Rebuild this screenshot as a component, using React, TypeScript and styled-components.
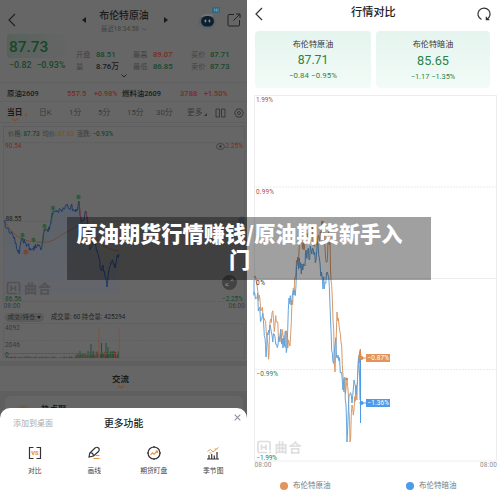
import React from "react";
import styled, { createGlobalStyle } from "styled-components";

const GlobalStyle = createGlobalStyle`
  * { box-sizing: border-box; }
  body { margin: 0; background: #fff; font-family: Roboto, "Noto Sans CJK SC", sans-serif; }
  svg { display: block; }
  svg text { font-family: Roboto, "Noto Sans CJK SC", sans-serif; }
`;

const GREEN = "#17472a";
const RED = "#7a2c22";
const INK = "#1a1a1a";
const MUTED = "#424242";

const Page = styled.div`
  position: relative;
  display: flex;
  width: 500px;
  height: 497px;
  overflow: hidden;
`;
const QuotePanel = styled.section`
  display: flex;
  flex-direction: column;
  width: 247px;
  height: 497px;
  margin-right: 1px;
  background: #666;
`;
const ComparePanel = styled.section`
  display: flex;
  flex-direction: column;
  width: 252px;
  height: 497px;
  background: #fff;
`;
const QuoteHead = styled.header`
  display: grid;
  grid-template-columns: 67px 16px 66px 5px 34px 31px 14px;
  align-items: center;
  height: 34px;
  padding: 5px 0 0 8px;
`;
const ArrowSlot = styled.div`
  padding: 1px 0 0 7px;
`;
const IconLift = styled.div`
  padding-bottom: 5px;
`;
const TitleStack = styled.div`
  display: flex;
  flex-direction: column;
  align-items: center;
  gap: 2px;
  padding-top: 5px;
`;
const SubTitle = styled.div`
  display: flex;
  align-items: center;
  gap: 3px;
`;
const Contracts = styled.div`
  display: grid;
  grid-template-columns: 60px 27px 28px 58px 24px 30px;
  align-items: center;
  height: 19px;
  padding: 3px 0 0 7px;
  border-bottom: 1px solid #606060;
`;
const Label = styled.span<{ $size?: number; $color?: string; $weight?: number; $gap?: number }>`
  font-size: ${(p) => p.$size ?? 7.3}px;
  line-height: 1.3;
  color: ${(p) => p.$color ?? INK};
  font-weight: ${(p) => p.$weight ?? 400};
  letter-spacing: ${(p) => p.$gap ?? 0}px;
  white-space: nowrap;
`;
const Summary = styled.div`
  display: flex;
  height: 40px;
`;
const PriceBlock = styled.div`
  width: 69px;
  padding-left: 7px;
`;
const PriceBox = styled.div`
  display: flex;
  align-items: center;
  height: 24px;
  padding: 2px 0 0 2px;
  border-radius: 2px;
  background: linear-gradient(90deg, #58625c, #656666);
`;
const Change = styled.div`
  display: flex;
  gap: 5px;
  padding: 2px 0 0 2px;
`;
const Stats = styled.div`
  display: grid;
  grid-template-columns: 20px 37px 20px 38px 19px 30px;
  grid-template-rows: 12px 12px;
  align-items: center;
  padding: 15px 0 0 7px;
`;
const ChevronRow = styled.div`
  display: flex;
  justify-content: center;
  height: 9px;
  border-bottom: 1px solid #606060;
`;
const Tabs = styled.div`
  display: grid;
  grid-template-columns: 32px 30px 29px 29px 29px 31px 28px 19px 10px;
  align-items: center;
  height: 21px;
  padding: 2px 0 0 7px;
  border-bottom: 1px solid #606060;
`;
const TabLabel = styled.div`
  display: flex;
  align-items: flex-end;
  gap: 2px;
  svg { margin-bottom: 2px; }
`;
const ActiveTab = styled.div`
  display: flex;
  flex-direction: column;
  align-items: flex-start;
  padding-top: 4px;
`;
const SmileSlot = styled.div`
  padding-left: 4px;
`;
const InfoRow = styled.div`
  display: grid;
  grid-template-columns: 15.5px 19px 15.5px 19px 15.5px 24px;
  align-items: center;
  height: 16px;
  margin: 3px 2px 0 3px;
  padding-left: 4px;
  border: 1px solid #5e5e5e;
  border-bottom: 0;
`;
const VolumeRow = styled.div`
  display: flex;
  align-items: center;
  gap: 7px;
  height: 14px;
  padding: 2px 0 0 5px;
`;
const Pill = styled.div`
  display: flex;
  align-items: center;
  justify-content: center;
  gap: 2px;
  width: 39px;
  height: 9px;
  border-radius: 5px;
  background: #5b5b5b;
`;
const Forum = styled.div`
  display: flex;
  flex-direction: column;
  align-items: center;
  height: 30px;
  padding: 8px 6px 0 0;
  border-top: 5px solid #5f5f5f;
`;
const Feed = styled.div`
  flex: 1;
  padding: 5px 4px 0 5px;
  background: #5f5f5f;
`;
const FeedCard = styled.div`
  display: flex;
  align-items: flex-start;
  gap: 10px;
  height: 30px;
  padding: 8px 0 0 11px;
  border-radius: 6px;
  background: #666;
`;
const Avatar = styled.div`
  width: 15px;
  height: 15px;
  margin-top: 1px;
  border-radius: 50%;
  background: #6b5d4c;
`;
const Sheet = styled.div`
  position: absolute;
  left: 0;
  bottom: 0;
  width: 247px;
  height: 89px;
  border-radius: 10px 10px 0 0;
  background: #fff;
`;
const SheetHead = styled.div`
  display: grid;
  grid-template-columns: 91px 130px 7px;
  height: 31px;
  padding: 1px 0 0 13px;
  align-items: center;
  svg { margin-bottom: 13px; }
`;
const Functions = styled.div`
  display: grid;
  grid-template-columns: repeat(4, 59.5px);
  padding: 7px 0 0 5px;
`;
const FunctionItem = styled.div`
  display: flex;
  flex-direction: column;
  align-items: center;
  gap: 6.5px;
`;
const CompareHead = styled.div`
  display: grid;
  grid-template-columns: 96px 126px 14px;
  align-items: center;
  height: 27px;
  padding-left: 7px;
`;
const Cards = styled.div`
  display: flex;
  gap: 5px;
  padding: 4px 0 0 7px;
`;
const CompareCard = styled.div<{ $w: number }>`
  display: flex;
  flex-direction: column;
  align-items: center;
  gap: 3px;
  width: ${(p) => p.$w}px;
  height: 57px;
  padding: 8px 0 0 0;
  border-radius: 4px;
  background: linear-gradient(#e5f4ee, #f2fbf7);
`;
const ChartSlot = styled.div`
  padding-top: 7px;
`;
const Legend = styled.div`
  display: flex;
  align-items: center;
  height: 18px;
  margin-top: 7px;
  padding-left: 32px;
  gap: 75.5px;
`;
const LegendItem = styled.div`
  display: flex;
  align-items: center;
  gap: 5px;
`;
const Dot = styled.i<{ $color: string }>`
  width: 8px;
  height: 8px;
  border-radius: 50%;
  background: ${(p) => p.$color};
`;
const Banner = styled.h1`
  position: absolute;
  left: 67px;
  top: 217px;
  width: 364px;
  height: 63px;
  margin: 0;
  padding: 3px 28px 0 9px;
  background: rgba(0, 0, 0, 0.373);
  color: #fff;
  font: 900 21.2px/26px "Noto Sans CJK SC", sans-serif;
  text-align: center;
  white-space: nowrap;
`;

type Point = [number, number];

/* Inserts deterministic noisy samples between the given turning points. */
function jagged(points: Point[], amp: number, seed: number) {
  const out: string[] = [];
  points.forEach(([x, y], i) => {
    out.push(`${x},${y}`);
    const next = points[i + 1];
    if (!next) return;
    const n = Math.max(1, Math.round((next[0] - x) * 1.1));
    for (let k = 1; k <= n; k++) {
      const t = k / (n + 1);
      const s = Math.sin((i * 7 + k * 3 + 1) * 12.9898 * seed) * 43758.5453;
      const r = (s - Math.floor(s)) * 2 - 1;
      out.push(`${(x + (next[0] - x) * t).toFixed(1)},${(y + (next[1] - y) * t + r * amp).toFixed(1)}`);
    }
  });
  return out.join(" ");
}

const price: Point[] = [[4,221],[6,228],[8,228],[10,233],[13,236],[16,243],[18,252],[19,254],[20,246],[22,238],[25,243],[28,245],[30,248],[33,249],[34,246],[36,248],[38,244],[41,250],[43,240],[44,232],[46,229],[48,232],[50,225],[52,213],[54,211],[57,212],[60,209],[64,209],[67,204],[69,209],[71,206],[74,211],[76,209],[78,206],[79,201],[80,216],[82,222],[84,220],[86,211],[88,225],[89,236],[90,250],[93,242],[95,245],[97,250],[99,258],[101,270],[103,265],[105,276],[107,287],[109,270],[111,262],[113,262],[115,268],[117,256],[119,254]];
const blueLine: Point[] = [[254,280],[254,292],[257,298],[259,308],[262,318],[265,338],[266,357],[268,335],[270,325],[272,335],[275,337],[278,345],[280,335],[283,348],[285,332],[287,348],[289,298],[291,305],[294,295],[296,285],[297,265],[300,268],[302,264],[305,266],[306,250],[309,260],[311,250],[314,255],[316,260],[318,244],[320,263],[323,289],[325,282],[328,275],[330,305],[331,330],[333,362],[335,345],[338,355],[341,372],[343,390],[344,378],[346,405],[347,442],[349,395],[352,403],[354,380],[356,395],[358,367],[359,360],[360,400]];
const orangeLine: Point[] = [[254,278],[257,285],[260,300],[264,318],[268,345],[269,355],[270,322],[272,313],[275,325],[277,322],[280,342],[283,335],[285,345],[287,338],[290,346],[292,300],[294,295],[296,275],[297,262],[301,243],[304,250],[306,235],[309,245],[312,230],[314,240],[316,236],[319,238],[321,235],[323,221],[325,248],[327,262],[328,241],[330,238],[331,280],[333,320],[335,372],[337,312],[339,325],[341,342],[343,376],[344,392],[347,380],[349,412],[350,442],[352,405],[354,410],[356,385],[357,400],[358,368],[360,352],[361,358]];

const Back = ({ c }: { c: string }) => (
  <svg width="8" height="14" fill="none" stroke={c} strokeWidth="1.2"><path d="M7 1 1 7l6 6" /></svg>
);
const Arrow = ({ flip }: { flip?: boolean }) => (
  <svg width="5" height="6" fill={INK}><path d={flip ? "M0 0v6l4-3z" : "M4 0v6L0 3z"} /></svg>
);
const Corner = ({ c }: { c: string }) => (
  <svg width="3" height="3" fill={c}><path d="M3 0v3H0z" /></svg>
);
const Smile = () => (
  <svg width="8" height="4" fill="none" stroke="#8a4e20" strokeWidth="1.5"><path d="M.7.6Q4 4.4 7.3.6" /></svg>
);
const Robot = () => (
  <svg width="24" height="24">
    <ellipse cx="11" cy="17" rx="9" ry="7" fill="#50606e" opacity=".5" />
    <path d="M5 12q3-4 9-2.500l2-1 1 3z" fill="#777" />
    <rect x="5" y="11" width="13" height="10.500" rx="5.200" fill="#111e2a" />
    <rect x="8.700" y="14.500" width="1.500" height="3" rx=".7" fill="#63a2b5" />
    <rect x="12.700" y="14.500" width="1.500" height="3" rx=".7" fill="#63a2b5" />
    <path d="M18 2h6v4q0 2-2 2h-6V4q0-2 2-2z" fill="#316783" />
    <path d="M18.500 3.500v3m0-1.500h2m0-1.500v3m1.500-3v3" stroke="#79a0ac" strokeWidth=".8" />
  </svg>
);
const Share = () => (
  <svg width="14" height="14" fill="none" stroke="#222" strokeWidth="1"><path d="M7 1.500H2q-1 0-1 1V12q0 1 1 1h9.500q1 0 1-1V7M9 1h4v4M13 1 6.500 7.500" /></svg>
);

const Watermark = ({ x, y, c }: { x: number; y: number; c: string }) => (
  <g transform={`translate(${x} ${y})`} fill="none" stroke={c} strokeWidth="1.7">
    <path d="M10 12H2q-1 0-1-1V2q0-1 1-1h10q1 0 1 1v8M4.500 4v5.500m4.500-5.500v5.500M4.500 6.800H9M12 12h2" />
    <text x="17.500" y="11.500" fontSize="13" fontWeight="700" fill={c} stroke="none" textLength="27">曲合</text>
  </g>
);

const Marker = ({ x, y, red }: { x: number; y: number; red?: boolean }) => (
  <g>
    <circle cx={x} cy={y} r="2.600" fill={red ? "#71514a" : "#4c6653"} />
    <text x={x} y={y + 1.7} fontSize="4.800" textAnchor="middle" fontWeight="700" fill={red ? "#94301f" : "#174d27"}>9</text>
  </g>
);

const PriceChart = () => (
  <svg width="247" height="167" viewBox="0 142 247 167">
    <path d="M3.500 142v159.500h241V142M3 142.500h242" fill="none" stroke="#5e5e5e" strokeWidth=".8" />
    <path d="M4 221.500h240" stroke="#5c5c5c" strokeWidth=".6" />
    <defs>
      <linearGradient id="area" x1="0" y1="0" x2="0" y2="1"><stop stopColor="#5c626b" /><stop offset="1" stopColor="#63656a" /></linearGradient>
    </defs>
    <polygon points={`4,295 ${jagged(price, 0.5, 2.1)} 119,295`} fill="url(#area)" />
    <Watermark x={6.5} y={281.5} c="#525252" />
    <path d="M4 220Q12 235 22 239T48 242Q53 241 61 235L76 227Q86 221 88 224 92 232 100 243 108 250 119 251" fill="none" stroke="#70452f" strokeWidth=".8" />
    <polyline points={jagged(price, 3.2, 2.1)} fill="none" stroke="#1b3569" strokeWidth=".9" />
    <path d="M23 237v5m21-13-2 15m9-20 2-11m26-3v-5" stroke="#27583a" strokeWidth=".8" />
    <path d="m79 202 2 18m5-9 3 23" stroke="#743437" strokeWidth=".8" />
    <Marker x={22.5} y={235.5} /><Marker x={33.5} y={240} /><Marker x={44.5} y={226.5} />
    <Marker x={53} y={208.5} /><Marker x={78.5} y={197} /><Marker x={26} y={252} red />
    <text x="5" y="148" fontSize="6.500" fill={RED} textLength="16.500">90.54</text>
    <text x="5.500" y="220.500" fontSize="6.500" fill="#222" textLength="16">88.55</text>
    <text x="5" y="301" fontSize="6.500" fill={GREEN} textLength="16.500">86.56</text>
    <text x="3.500" y="308" fontSize="6.500" fill="#3c3c3c" textLength="17">08:00</text>
    <text x="225.500" y="148" fontSize="6.500" fill={RED} textLength="17.500">2.25%</text>
    <text x="222" y="301" fontSize="6.500" fill={GREEN} textLength="21">−2.25%</text>
    <text x="228.500" y="308" fontSize="6.500" fill="#3c3c3c" textLength="16.500">06:00</text>
    <ellipse cx="220.500" cy="146.500" rx="4" ry="3" fill="none" stroke="#333" strokeWidth=".7" /><circle cx="220.500" cy="146.500" r="1.200" fill="#333" />
    <path d="M244 216.500h-2a4 4 0 0 0 0 8h2z" fill="#4c5a68" />
    <circle cx="229.500" cy="282.500" r="7.500" fill="#434343" />
    <path d="m230.500 281.500 2.500-2.500m-2.500 0h2.500v2.500m-4.500 1.500-2.500 2.500m0-2.500v2.500h2.500" stroke="#858585" fill="none" strokeWidth=".8" />
  </svg>
);

const bars = Array.from({ length: 112 }, (_, i) => {
  const x = 5 + i * 1.02;
  const r = Math.abs(Math.sin(i * 12.98) * 43.7) % 1;
  const h = x < 75 ? r * 1.8 : x < 87 ? 1 + r * 4 : 2 + r * 5;
  return { x, h, green: (i * 7) % 5 < 3 };
});
const spikes: [number, number][] = [[79.5, 7], [90.5, 14], [93, 7], [105.5, 15], [107.5, 11], [101, 15]];

const VolumeChart = () => (
  <svg width="247" height="38" viewBox="0 323 247 38">
    <rect x="3.500" y="323.500" width="241" height="34.500" fill="none" stroke="#5f5f5f" strokeWidth=".7" />
    <path d="M4 340.500h240" stroke="#5c5c5c" strokeWidth=".6" strokeDasharray="2 1" />
    {bars.map((b) => <rect key={b.x} x={b.x} y={358 - b.h} width=".9" height={b.h} fill={b.green ? "#254e31" : "#703a2f"} />)}
    {spikes.map(([x, h]) => <rect key={x} x={x} y={358 - h} width="1" height={h} fill="#254e31" />)}
    <path d="M99 358V327M119.300 358V327.500" stroke="#86523f" strokeWidth="1.100" />
    <path d="M4 353.500h115" stroke="#725038" strokeWidth=".9" />
    <text x="5" y="329.800" fontSize="6.500" fill="#383838" textLength="15">4092</text>
    <text x="5" y="347" fontSize="6.500" fill="#383838" textLength="15">2046</text>
    <text x="5" y="356.500" fontSize="6.500" fill="#383838">0</text>
  </svg>
);

const CompareChart = () => (
  <svg width="252" height="375" viewBox="248 95 252 375">
    <path d="M254.500 461V95.500H496.500V461z" fill="none" stroke="#ededed" />
    <path d="M255 187h241M255 369.500h241" stroke="#ebebeb" strokeDasharray="2 1" />
    <path d="M255 278.500h241" stroke="#ededed" />
    <Watermark x={257} y={440.5} c="#dedede" />
    <polyline points={jagged(orangeLine, 10, 1.7)} fill="none" stroke="#d99a68" strokeWidth="1" />
    <polyline points={jagged(blueLine, 10, 2.9)} fill="none" stroke="#64a4dc" strokeWidth="1" />
    <path d="M360.500 358v65" stroke="#4d9ae6" strokeWidth="1" />
    <path d="M359.500 363v-10l.8-4 .5 9" stroke="#df874d" fill="none" strokeWidth="1.200" />
    <circle cx="346.500" cy="379" r="1.600" fill="#d9854f" />
    <path d="M361 358h6" stroke="#e2945b" /><circle cx="361.500" cy="358" r="2" fill="#e08a50" />
    <rect x="366" y="354" width="24" height="8" fill="#e2945b" />
    <text x="367.500" y="360.300" fontSize="6.500" fill="#fff" textLength="21.500">−0.87%</text>
    <path d="M361 403h6" stroke="#4d9ae8" /><circle cx="361.500" cy="403" r="2" fill="#4d9ae8" />
    <rect x="366" y="399" width="24" height="8" fill="#4d9ae8" />
    <text x="367.500" y="405.300" fontSize="6.500" fill="#fff" textLength="21.500">−1.36%</text>
    <g fontSize="6.500">
      <text x="256" y="102" fill="#b84a3c" textLength="17">1.99%</text>
      <text x="256" y="193.500" fill="#b84a3c" textLength="18">0.99%</text>
      <text x="256" y="285" fill="#333" textLength="9">0%</text>
      <text x="256.500" y="375.800" fill="#2a8348" textLength="21.500">−0.99%</text>
      <text x="256.500" y="459.500" fill="#2a8348" textLength="20.500">−1.99%</text>
      <text x="254.500" y="467" fill="#8d8d8d" textLength="17">08:00</text>
      <text x="480" y="467" fill="#8d8d8d" textLength="17">08:00</text>
    </g>
  </svg>
);

const functionItems = [
  { label: "对比", icon: <><path d="M5.500 1.500h-4v11h4M8.500 1.500h4v11h-4" /><text x="7" y="9.300" fontSize="5.800" fontWeight="900" textAnchor="middle" fill="#ea963e" stroke="none">VS</text></> },
  { label: "画线", icon: <><path d="m2 11 .8-4L8 2q2-1.500 3.500 0t0 3.500L6.500 10zM3 7q3-1 3.500 3" /><path d="M8.500 9.500h4M6.500 12.500h6" stroke="#ea963e" /></> },
  { label: "期货盯盘", icon: <><circle cx="7" cy="7" r="6" /><path d="M7 0v2m0 10v2M0 7h2m10 0h2" /><path d="m3.500 8.800 2-2 1.500 1.400L10.500 5M8.500 5h2v2" stroke="#ea963e" /></> },
  { label: "季节图", icon: <><path d="M1 13h12M3 13V9m2.700 4V8m2.600 5V9.500M11 13V6" /><path d="m1.500 5.500 3-2L7 6l5.500-4.500M3.500 7h2m3-4h2" stroke="#ea963e" strokeWidth="1" /></> },
];

const stats: [string, string, string][] = [
  ["开盘", "88.51", GREEN], ["最高", "89.07", RED], ["买价", "87.71", GREEN],
  ["量", "8.76万", INK], ["最低", "86.85", GREEN], ["卖价", "87.73", GREEN],
];
const contracts: [string, string, string][] = [
  ["原油2609", "557.5", "+0.98%"],
  ["燃料油2609", "3788", "+1.50%"],
];
const periods = ["日K", "1分", "5分", "15分", "30分"];
const info: [string, string, string][] = [
  ["价格:", "87.73", GREEN], ["均价:", "87.83", "#855021"], ["涨跌:", "−0.93%", GREEN],
];

export default function App() {
  return (
    <Page>
      <GlobalStyle />
      <QuotePanel>
        <QuoteHead>
          <Back c="#222" />
          <ArrowSlot><Arrow /></ArrowSlot>
          <TitleStack>
            <Label $size={9.9} $weight={500}>布伦特原油</Label>
            <SubTitle>
              <Label $size={6.3} $color="#3f3f3f" $gap={0.1}>最近18:34:58</Label>
              <svg width="5" height="3" fill="none" stroke="#444" strokeWidth=".7"><path d="m.5.3 2 2 2-2" /></svg>
            </SubTitle>
          </TitleStack>
          <ArrowSlot><Arrow flip /></ArrowSlot>
          <span />
          <IconLift><Robot /></IconLift>
          <Share />
        </QuoteHead>
        <Summary>
          <PriceBlock>
            <PriceBox><Label $size={15.4} $color={GREEN} $weight={500}>87.73</Label></PriceBox>
            <Change>
              <Label $size={8.8} $color={GREEN} $weight={500}>−0.82</Label>
              <Label $size={8.8} $color={GREEN} $weight={500}>−0.93%</Label>
            </Change>
          </PriceBlock>
          <Stats>
            {stats.map(([name, value, color]) => (
              <React.Fragment key={name}>
                <Label $color={MUTED} $size={7.2}>{name}</Label>
                <Label $color={color} $size={7.7} $weight={500}>{value}</Label>
              </React.Fragment>
            ))}
          </Stats>
        </Summary>
        <ChevronRow><svg width="6" height="4" fill="none" stroke="#222"><path d="m.5.5 2.500 2.500L5.500.5" /></svg></ChevronRow>
        <Contracts>
          {contracts.map(([name, value, change]) => (
            <React.Fragment key={name}>
              <Label $weight={500} $size={7.4}>{name}</Label>
              <Label $color={RED} $size={7.6} $weight={500}>{value}</Label>
              <Label $color={RED} $size={7.2} $weight={500}>{change}</Label>
            </React.Fragment>
          ))}
        </Contracts>
        <Tabs>
          <ActiveTab>
            <TabLabel><Label $size={7.7} $weight={700}>当日</Label><Corner c="#8a4e20" /></TabLabel>
            <SmileSlot><Smile /></SmileSlot>
          </ActiveTab>
          {periods.map((p) => <Label key={p} $color="#3a3a3a" $size={7.8}>{p}</Label>)}
          <TabLabel><Label $color="#3a3a3a" $size={7.7}>更多</Label><Corner c="#333" /></TabLabel>
          <svg width="11" height="10" fill="none" stroke="#333" strokeWidth=".9"><path d="M1 1h3.500v8H1zM6.500 1H10v8H6.500z" /></svg>
          <svg width="10" height="10" fill="none" stroke="#333" strokeWidth=".9"><path d="M3 1h4l2.500 4L7 9H3L.5 5z" /><circle cx="5" cy="5" r="1.500" /></svg>
        </Tabs>
        <InfoRow>
          {info.map(([name, value, color]) => (
            <React.Fragment key={name}>
              <Label $size={6.3} $color="#3c3c3c">{name}</Label>
              <Label $size={6.3} $color={color} $weight={500}>{value}</Label>
            </React.Fragment>
          ))}
        </InfoRow>
        <PriceChart />
        <VolumeRow>
          <Pill><Label $size={6.2} $color="#2b2b2b">成交/持仓</Label><svg width="4" height="3" fill="#222"><path d="M0 0h4L2 3z" /></svg></Pill>
          <Label $size={6.3} $color="#222" $gap={0.03}>成交量: 60 持仓量: 425294</Label>
        </VolumeRow>
        <VolumeChart />
        <Forum><Label $size={8.5} $weight={700}>交流</Label><Smile /></Forum>
        <Feed>
          <FeedCard><Avatar /><Label $size={8.5} $weight={700}>热点聚</Label></FeedCard>
        </Feed>
        <Sheet>
          <SheetHead>
            <Label $size={8} $color="#aaa">添加到桌面</Label>
            <Label $size={9.8} $color="#222" $weight={500}>更多功能</Label>
            <svg width="7" height="7" stroke="#8c929e" strokeWidth="1.100"><path d="m.7.7 5.600 5.600m0-5.600L.7 6.300" /></svg>
          </SheetHead>
          <Functions>
            {functionItems.map((f) => (
              <FunctionItem key={f.label}>
                <svg width="14" height="14" fill="none" stroke="#333" strokeWidth="1.200">{f.icon}</svg>
                <Label $size={6.8} $color="#444">{f.label}</Label>
              </FunctionItem>
            ))}
          </Functions>
        </Sheet>
      </QuotePanel>
      <ComparePanel>
        <CompareHead>
          <Back c="#333" />
          <Label $size={11.2} $color="#222" $weight={500}>行情对比</Label>
          <svg width="14" height="14" fill="none" stroke="#333" strokeWidth="1.200"><path d="M4.500 12.500A6 6 0 1 1 9.700 12.400M9.300 9.700v3h3" /></svg>
        </CompareHead>
        <Cards>
          <CompareCard $w={116}>
            <Label $size={8.1} $color="#333">布伦特原油</Label>
            <Label $size={12.2} $color="#2a8348">87.71</Label>
            <Label $size={7.8} $color="#2a8348" $gap={0.1}>−0.84 −0.95%</Label>
          </CompareCard>
          <CompareCard $w={114}>
            <Label $size={8.1} $color="#333">布伦特暗油</Label>
            <Label $size={12.7} $color="#2a8348">85.65</Label>
            <Label $size={7.4} $color="#2a8348">−1.17 −1.35%</Label>
          </CompareCard>
        </Cards>
        <ChartSlot><CompareChart /></ChartSlot>
        <Legend>
          <LegendItem><Dot $color="#e2945b" /><Label $size={7.5} $color="#777">布伦特原油</Label></LegendItem>
          <LegendItem><Dot $color="#4d9ae8" /><Label $size={7.5} $color="#777">布伦特暗油</Label></LegendItem>
        </Legend>
      </ComparePanel>
      <Banner>原油期货行情赚钱/原油期货新手入<br />门</Banner>
    </Page>
  );
}
